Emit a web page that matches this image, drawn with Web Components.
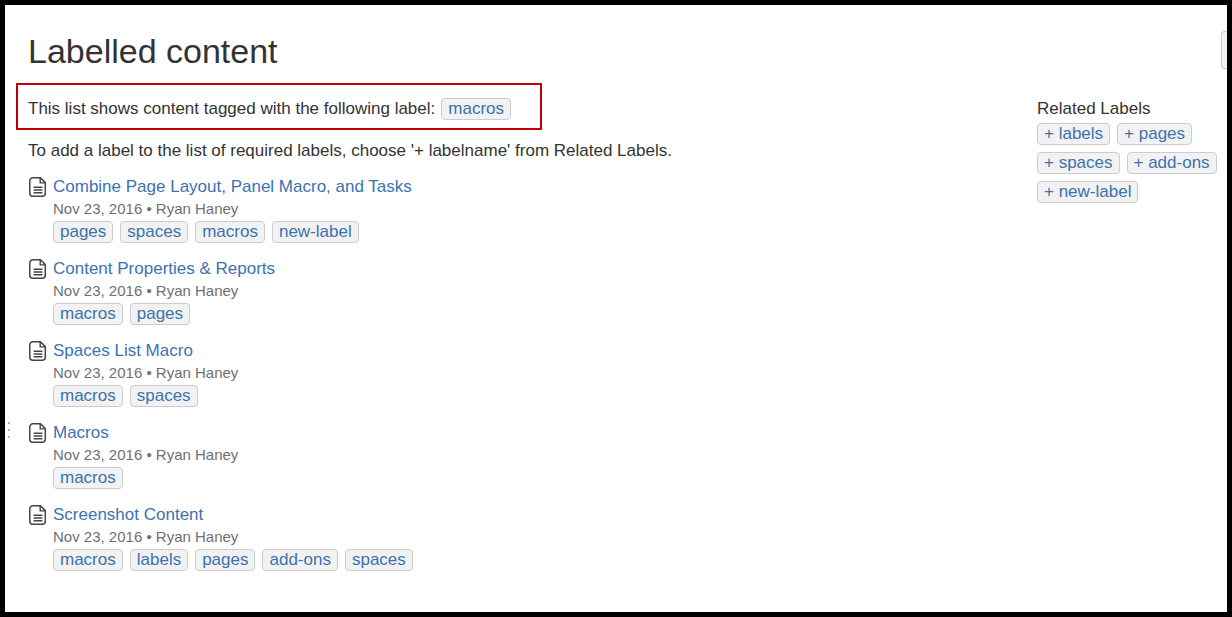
<!DOCTYPE html>
<html lang="en">
<head>
<meta charset="utf-8">
<meta name="viewport" content="width=device-width, initial-scale=1">
<title>Labelled content</title>
<style>
    :root {
        --text: #333;
        --muted: #707070;
        --link: #3b73af;
        --chip-bg: #f2f2f2;
        --chip-border: #ccc;
        --highlight: #c00000;
    }
    body {
        margin: 0;
        background: #fff;
        color: var(--text);
        font: 17px/24px "Liberation Sans", Arial, sans-serif;
    }
</style>
</head>
<body>
<page-frame>
    <page-header slot="header">Labelled content</page-header>

    <highlight-box>
        <span>This list shows content tagged with the following label:</span>
        <label-chip>macros</label-chip>
    </highlight-box>
    <hint-text>To add a label to the list of required labels, choose '+ labelname' from Related Labels.</hint-text>

    <content-list>
        <content-item heading="Combine Page Layout, Panel Macro, and Tasks" date="Nov 23, 2016" author="Ryan Haney">
            <label-chip>pages</label-chip>
            <label-chip>spaces</label-chip>
            <label-chip>macros</label-chip>
            <label-chip>new-label</label-chip>
        </content-item>
        <content-item heading="Content Properties &amp; Reports" date="Nov 23, 2016" author="Ryan Haney">
            <label-chip>macros</label-chip>
            <label-chip>pages</label-chip>
        </content-item>
        <content-item heading="Spaces List Macro" date="Nov 23, 2016" author="Ryan Haney">
            <label-chip>macros</label-chip>
            <label-chip>spaces</label-chip>
        </content-item>
        <content-item heading="Macros" date="Nov 23, 2016" author="Ryan Haney">
            <label-chip>macros</label-chip>
        </content-item>
        <content-item heading="Screenshot Content" date="Nov 23, 2016" author="Ryan Haney">
            <label-chip>macros</label-chip>
            <label-chip>labels</label-chip>
            <label-chip>pages</label-chip>
            <label-chip>add-ons</label-chip>
            <label-chip>spaces</label-chip>
        </content-item>
    </content-list>

    <related-labels slot="side" heading="Related Labels">
        <label-chip>+ labels</label-chip>
        <label-chip>+ pages</label-chip>
        <label-chip>+ spaces</label-chip>
        <label-chip>+ add-ons</label-chip>
        <label-chip>+ new-label</label-chip>
    </related-labels>
</page-frame>

<script>
class PageFrame extends HTMLElement {
    constructor() {
        super();
        this.attachShadow({ mode: 'open' });
        this.shadowRoot.innerHTML = `
            <style>
                :host {
                    display: block;
                    position: relative;
                    box-sizing: border-box;
                    min-height: 100vh;
                    border: 5px solid #000;
                    padding: 26px 0 32px 23px;
                }
                .columns {
                    display: grid;
                    grid-template-columns: minmax(0, 1fr) 190px;
                    margin-top: 12px;
                }
                aside { padding-top: 14px; }
                /* sidebar resize grip, sits over the left edge */
                .grip {
                    position: absolute;
                    left: 3px;
                    top: 70%;
                    display: grid;
                    gap: 5px;
                    transform: translateY(-50%);
                }
                .grip i { width: 2px; height: 2px; background: #b3b3b3; }
            </style>
            <slot name="header"></slot>
            <div class="columns">
                <main><slot></slot></main>
                <aside><slot name="side"></slot></aside>
            </div>
            <div class="grip" aria-hidden="true"><i></i><i></i><i></i></div>
        `;
    }
}

class PageHeader extends HTMLElement {
    constructor() {
        super();
        this.attachShadow({ mode: 'open' });
        this.shadowRoot.innerHTML = `
            <style>
                :host {
                    display: flex;
                    justify-content: space-between;
                    align-items: flex-start;
                }
                h1 { margin: 0; font-size: 34px; line-height: 40px; font-weight: normal; }
                button {
                    width: 6px;
                    height: 38px;
                    padding: 0;
                    background: var(--chip-bg);
                    border: 1px solid var(--chip-border);
                    border-right: 0;
                    border-radius: 4px 0 0 4px;
                }
            </style>
            <h1><slot></slot></h1>
            <button type="button" aria-label="Page tools"></button>
        `;
    }
}

class HighlightBox extends HTMLElement {
    constructor() {
        super();
        this.attachShadow({ mode: 'open' });
        this.shadowRoot.innerHTML = `
            <style>
                :host {
                    display: flex;
                    width: fit-content;
                    align-items: center;
                    gap: 6px;
                    margin-left: -12px;
                    padding: 13px 29px 8px 10px;
                    border: 2px solid var(--highlight);
                    line-height: 22px;
                }
            </style>
            <slot></slot>
        `;
    }
}

class HintText extends HTMLElement {
    constructor() {
        super();
        this.attachShadow({ mode: 'open' });
        this.shadowRoot.innerHTML = `
            <style>
                :host { display: block; }
                p { margin: 9px 0 12px; }
            </style>
            <p><slot></slot></p>
        `;
    }
}

class LabelChip extends HTMLElement {
    constructor() {
        super();
        this.attachShadow({ mode: 'open' });
        this.shadowRoot.innerHTML = `
            <style>
                :host { display: block; }
                a {
                    display: block;
                    padding: 0 6px;
                    border: 1px solid var(--chip-border);
                    border-radius: 4px;
                    background: var(--chip-bg);
                    color: var(--link);
                    line-height: 20px;
                    text-decoration: none;
                    white-space: nowrap;
                }
                a:hover { text-decoration: underline; }
            </style>
            <a href="#"><slot></slot></a>
        `;
    }
}

class ContentList extends HTMLElement {
    constructor() {
        super();
        this.attachShadow({ mode: 'open' });
        this.shadowRoot.innerHTML = `
            <style>
                :host { display: grid; gap: 14px; }
            </style>
            <slot></slot>
        `;
    }

    connectedCallback() {
        this.setAttribute('role', 'list');
    }
}

class ContentItem extends HTMLElement {
    constructor() {
        super();
        this.attachShadow({ mode: 'open' });
        this.shadowRoot.innerHTML = `
            <style>
                :host {
                    display: grid;
                    grid-template-columns: 25px minmax(0, 1fr);
                }
                svg { display: block; margin: 2px 0 0 1px; }
                .title { display: block; width: fit-content; color: var(--link); text-decoration: none; }
                .title:hover { text-decoration: underline; }
                .meta { color: var(--muted); font-size: 15px; line-height: 20px; }
                .labels { display: flex; flex-wrap: wrap; gap: 7px; margin-top: 2px; }
            </style>
            <svg width="18" height="20" viewBox="0 0 18 20" fill="none" stroke="#444" aria-hidden="true">
                <path stroke-width="1.5" stroke-linejoin="round" d="M3.8.8H11.5L16.3 5.6V16.2a3 3 0 0 1-3 3H3.8a3 3 0 0 1-3-3V3.8a3 3 0 0 1 3-3Z"/>
                <path stroke-width="1.4" d="M11.2 1v4.9h4.9"/>
                <path stroke-width="1.5" d="M4.6 10.2h8.8M4.6 13h8.8M4.6 15.8h8.8"/>
            </svg>
            <div>
                <a class="title" href="#"></a>
                <div class="meta"></div>
                <div class="labels"><slot></slot></div>
            </div>
        `;
    }

    connectedCallback() {
        this.setAttribute('role', 'listitem');
        this.shadowRoot.querySelector('.title').textContent = this.getAttribute('heading');
        this.shadowRoot.querySelector('.meta').textContent =
            `${this.getAttribute('date')} • ${this.getAttribute('author')}`;
    }
}

class RelatedLabels extends HTMLElement {
    constructor() {
        super();
        this.attachShadow({ mode: 'open' });
        this.shadowRoot.innerHTML = `
            <style>
                :host { display: block; }
                h2 { margin: 0 0 2px; font-size: 17px; line-height: 24px; font-weight: normal; }
                .labels { display: flex; flex-wrap: wrap; gap: 7px; }
            </style>
            <h2></h2>
            <div class="labels"><slot></slot></div>
        `;
    }

    connectedCallback() {
        this.shadowRoot.querySelector('h2').textContent = this.getAttribute('heading');
    }
}

customElements.define('page-frame', PageFrame);
customElements.define('page-header', PageHeader);
customElements.define('highlight-box', HighlightBox);
customElements.define('hint-text', HintText);
customElements.define('label-chip', LabelChip);
customElements.define('content-list', ContentList);
customElements.define('content-item', ContentItem);
customElements.define('related-labels', RelatedLabels);
</script>
</body>
</html>
